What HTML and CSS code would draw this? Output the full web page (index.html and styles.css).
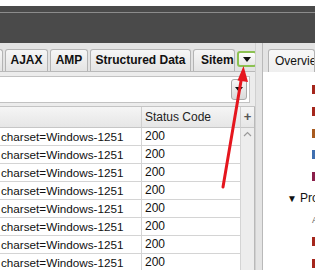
FILE: index.html
```html
<!DOCTYPE html>
<html>
<head>
<meta charset="utf-8">
<link rel="stylesheet" href="styles.css">
</head>
<body>
<div class="topstrip"></div>
<div class="titlebar"><div class="titleline"></div></div>
<div class="main">
  <div class="left">
    <div class="tabstrip">
      <div class="tab tab-partial"></div>
      <div class="tab tab-ajax">AJAX</div>
      <div class="tab tab-amp">AMP</div>
      <div class="tab tab-sd">Structured Data</div>
      <div class="tab tab-sitem"><span>Sitemaps</span></div>
      <div class="more-btn"><span class="tri"></span></div>
    </div>
    <div class="filterbar">
      <div class="combo">
        <div class="combo-btn"><span class="tri"></span></div>
      </div>
    </div>
    <div class="table">
      <div class="grid">
        <div class="hcell c1"></div>
        <div class="hcell c2">Status Code</div>
        <div class="row"><div class="cell c1">charset=Windows-1251</div><div class="cell c2">200</div></div>
        <div class="row"><div class="cell c1">charset=Windows-1251</div><div class="cell c2">200</div></div>
        <div class="row"><div class="cell c1">charset=Windows-1251</div><div class="cell c2">200</div></div>
        <div class="row"><div class="cell c1">charset=Windows-1251</div><div class="cell c2">200</div></div>
        <div class="row"><div class="cell c1">charset=Windows-1251</div><div class="cell c2">200</div></div>
        <div class="row"><div class="cell c1">charset=Windows-1251</div><div class="cell c2">200</div></div>
        <div class="row"><div class="cell c1">charset=Windows-1251</div><div class="cell c2">200</div></div>
        <div class="row"><div class="cell c1">charset=Windows-1251</div><div class="cell c2">200</div></div>
      </div>
      <div class="vscroll">
        <div class="plus">+</div>
        <div class="track">
          <svg class="uparrow" width="9" height="6" viewBox="0 0 9 6"><path d="M1 5 L4.5 1.5 L8 5" fill="none" stroke="#9a9a9a" stroke-width="1.2"/></svg>
        </div>
      </div>
    </div>
  </div>
  <div class="splitter"></div>
  <div class="right">
    <div class="rtabstrip">
      <div class="rtab">Overview</div>
    </div>
    <div class="rcontent">
      <div class="ritem"><span class="mark red"></span></div>
      <div class="ritem"><span class="mark red"></span></div>
      <div class="ritem"><span class="mark brown"></span></div>
      <div class="ritem"><span class="mark blue"></span></div>
      <div class="ritem"><span class="mark purple"></span></div>
      <div class="ritem head"><span class="caret">▼</span> Protocol</div>
      <div class="ritem"><span class="letter">A</span></div>
      <div class="ritem"><span class="mark red"></span></div>
      <div class="ritem"><span class="mark red"></span></div>
    </div>
  </div>
</div>
<svg class="arrow" width="315" height="270" viewBox="0 0 315 270">
  <line x1="223" y1="187" x2="241.5" y2="78" stroke="#e5161e" stroke-width="3" stroke-linecap="round"/>
  <path d="M243.5 66 L248 82 L237.5 80.5 Z" fill="#e5161e"/>
</svg>
</body>
</html>
```
FILE: styles.css
```css
* { box-sizing: border-box; }
html, body {
  margin: 0;
  padding: 0;
}
body {
  width: 315px;
  height: 270px;
  overflow: hidden;
  position: relative;
  background: #ffffff;
  font-family: "Liberation Sans", Arial, sans-serif;
  font-size: 12px;
  color: #1e1e1e;
}
.topstrip {
  height: 6px;
  background: #ffffff;
}
.titlebar {
  height: 37px;
  background: #4a4a4a;
  padding-top: 6px;
}
.titleline {
  height: 1px;
  background: #8c8c8c;
}
.main {
  display: flex;
  height: 227px;
}
.left {
  width: 255px;
  display: flex;
  flex-direction: column;
}
.tabstrip {
  height: 29px;
  background: #e3e3e3;
  border-bottom: 1px solid #b9b9b9;
  display: flex;
  align-items: flex-end;
  gap: 2px;
  padding-top: 6px;
}
.tab {
  height: 22px;
  border: 1px solid #b4b4b4;
  border-bottom: none;
  border-radius: 3px 3px 0 0;
  background: linear-gradient(#f6f6f6, #e4e4e4);
  font-weight: bold;
  font-size: 12px;
  line-height: 21px;
  text-align: center;
  color: #111;
  overflow: hidden;
  white-space: nowrap;
  flex: none;
}
.tab-partial { width: 4px; border-left: none; border-radius: 0 3px 0 0; margin-left: -1px; }
.tab-ajax { width: 43px; }
.tab-amp { width: 38px; }
.tab-sd { width: 101px; }
.tab-sitem { width: 42px; text-align: left; padding-left: 7px; }
.tab-sitem span { display: inline-block; width: 34px; overflow: hidden; vertical-align: top; }
.more-btn {
  flex: none;
  width: 20px;
  height: 16px;
  margin-bottom: 4px;
  border: 2px solid #8cc152;
  border-radius: 3px;
  background: linear-gradient(#fdfdfd, #e6e6e6);
  display: flex;
  align-items: center;
  justify-content: center;
}
.tri {
  width: 0;
  height: 0;
  border-left: 4px solid transparent;
  border-right: 4px solid transparent;
  border-top: 5px solid #111;
}
.filterbar {
  height: 34px;
  background: #ececec;
  padding: 4px 5px 3px 0;
}
.combo {
  height: 27px;
  background: #ffffff;
  border: 1px solid #c2c2c2;
  border-left: none;
  display: flex;
  justify-content: flex-end;
  align-items: center;
  padding-right: 2px;
}
.combo-btn {
  width: 16px;
  height: 21px;
  border: 1px solid #a9a9a9;
  border-radius: 3px;
  background: linear-gradient(#f7f7f7, #dadada);
  display: flex;
  align-items: center;
  justify-content: center;
}
.table {
  flex: 1;
  display: flex;
  background: #ffffff;
  border-top: 1px solid #c4c4c4;
}
.grid {
  width: 241px;
  display: grid;
  grid-template-columns: 142px 99px;
  grid-auto-rows: 18px;
  grid-template-rows: 21px;
  align-content: start;
}
.row { display: contents; }
.hcell {
  background: linear-gradient(#f5f5f5, #e6e6e6);
  border-bottom: 1px solid #c6c6c6;
  border-right: 1px solid #cfcfcf;
  line-height: 20px;
  padding-left: 3px;
  color: #222;
}
.cell {
  border-bottom: 1px solid #d4d4d4;
  border-right: 1px solid #d4d4d4;
  line-height: 17px;
  padding-left: 3px;
  white-space: nowrap;
  overflow: hidden;
  color: #111;
}
.cell.c1 { padding-left: 1px; font-size: 11.7px; }
.vscroll {
  width: 14px;
  display: flex;
  flex-direction: column;
  border-right: 1px solid #b9b9b9;
}
.plus {
  height: 21px;
  background: linear-gradient(#f5f5f5, #e6e6e6);
  border-bottom: 1px solid #c6c6c6;
  text-align: center;
  font-weight: bold;
  font-size: 13px;
  line-height: 19px;
  color: #555;
}
.track {
  flex: 1;
  background: #ededed;
  display: flex;
  justify-content: center;
  padding-top: 3px;
}
.splitter {
  width: 8px;
  background: #e4e4e4;
  border-left: 1px solid #d0d0d0;
  border-right: 1px solid #b9b9b9;
}
.right {
  flex: 1;
  display: flex;
  flex-direction: column;
  min-width: 0;
}
.rtabstrip {
  height: 29px;
  background: #e3e3e3;
  display: flex;
  align-items: flex-end;
  padding-left: 5px;
}
.rtab {
  height: 23px;
  width: 60px;
  border: 1px solid #b4b4b4;
  border-bottom: none;
  border-radius: 3px 3px 0 0;
  background: linear-gradient(#f8f8f8, #efefef);
  padding-left: 6px;
  line-height: 22px;
  font-size: 12px;
  white-space: nowrap;
  overflow: hidden;
  color: #111;
}
.rcontent {
  flex: 1;
  background: #ffffff;
  padding-top: 7px;
  overflow: hidden;
}
.ritem {
  height: 21.7px;
  padding-left: 49px;
  display: flex;
  align-items: center;
  white-space: nowrap;
}
.mark {
  width: 4px;
  height: 9px;
}
.red { background: #a5261c; }
.brown { background: #a85a1e; }
.blue { background: #3f6fb0; }
.purple { background: #8a1e4a; }
.ritem.head {
  padding-left: 24px;
  font-size: 12px;
  color: #111;
}
.caret { font-size: 10px; margin-right: 3px; }
.letter { font-size: 9px; color: #666; }
.arrow {
  position: absolute;
  left: 0;
  top: 0;
  pointer-events: none;
}
```
